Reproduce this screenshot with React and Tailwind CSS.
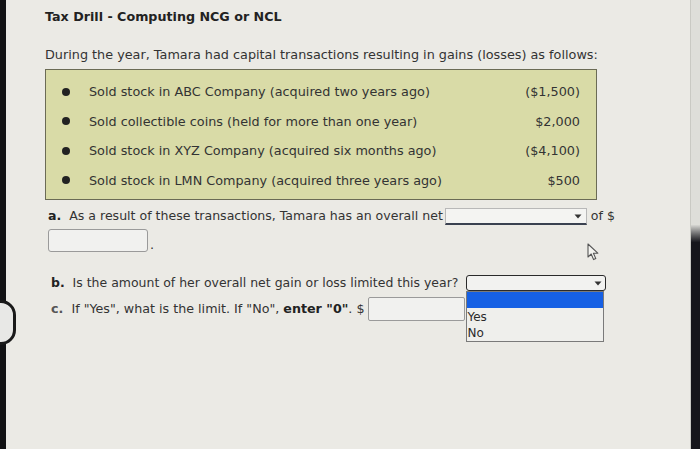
import React from 'react';

const rows = [
  { text: 'Sold stock in ABC Company (acquired two years ago)', amount: '($1,500)' },
  { text: 'Sold collectible coins (held for more than one year)', amount: '$2,000' },
  { text: 'Sold stock in XYZ Company (acquired six months ago)', amount: '($4,100)' },
  { text: 'Sold stock in LMN Company (acquired three years ago)', amount: '$500' },
];

function Caret() {
  return (
    <svg width="8" height="5" viewBox="0 0 8 5" className="shrink-0">
      <path d="M0.5 0.5 L7.5 0.5 L4 4.5 Z" fill="#333" />
    </svg>
  );
}

function Pointer() {
  return (
    <svg width="14" height="18" viewBox="0 0 14 18">
      <path
        d="M1 1 L1 14 L4.2 11 L6.6 16.6 L8.8 15.6 L6.4 10.2 L10.8 10.2 Z"
        fill="#f4f4f0"
        stroke="#555"
        strokeWidth="1.1"
        strokeLinejoin="round"
      />
    </svg>
  );
}

export default function App() {
  return (
    <div
      className="w-[700px] h-[449px] flex overflow-hidden relative bg-[#ebeae5] text-[#333] text-[12.8px]"
      style={{ fontFamily: '"DejaVu Sans", Verdana, sans-serif' }}
    >
      {/* monitor bezel, left */}
      <div className="w-[6px] bg-[#121214] shrink-0" />
      <div className="absolute left-[-14px] top-[300px] w-[30px] h-[45px] rounded-full border-[3px] border-[#1a1a1a] bg-[#e8e8e6]" />

      <div className="flex-1 pl-[39px] pt-[8px]">
        <h1 className="text-[12.7px] font-bold text-[#222] leading-[18px]">Tax Drill - Computing NCG or NCL</h1>

        <p className="mt-[20px] leading-[18px]">
          During the year, Tamara had capital transactions resulting in gains (losses) as follows:
        </p>

        <div className="mt-[5px] w-[552px] h-[131px] bg-[#d9dba7] border border-[#6b6b55] pl-[16px] pr-[16px] pt-[7px]">
          {rows.map((r) => (
            <div key={r.text} className="flex items-center h-[29.5px]">
              <span className="w-[8px] h-[8px] rounded-full bg-[#222] mr-[19px] shrink-0" />
              <span className="flex-1">{r.text}</span>
              <span>{r.amount}</span>
            </div>
          ))}
        </div>

        <div className="flex items-center mt-[7px] ml-[3px] h-[19px] text-[12.55px]">
          <span>
            <b className="text-[#222]">a.</b>&nbsp; As a result of these transactions, Tamara has an overall net
          </span>
          <div className="ml-[2px] w-[142px] h-[17px] bg-[#f4f4f2] border border-[#b8b8b8] border-b-[2px] border-b-[#3a4150] flex items-center justify-end pr-[4px]">
            <Caret />
          </div>
          <span className="ml-[4px]">of $</span>
        </div>

        <div className="flex items-end ml-[3px] mt-[3px]">
          <div className="w-[100px] h-[23px] bg-[#f1f1ef] border border-[#9a9a9a] rounded-[3px]" />
          <span className="ml-[2px] leading-[14px]">.</span>
          <div className="ml-[433px] mb-[-9px]">
            <Pointer />
          </div>
        </div>

        <div className="flex items-center mt-[22px] ml-[6px] h-[18px] text-[12.48px]">
          <span>
            <b className="text-[#222]">b.</b>&nbsp; Is the amount of her overall net gain or loss limited this year?
          </span>
          <div className="relative ml-[8px]">
            <div className="w-[140px] h-[16px] bg-[#f2f2f0] border-[1.5px] border-[#2a2a2a] rounded-[3px] flex items-center justify-end pr-[3px]">
              <Caret />
            </div>
            <div className="absolute left-0 top-[16px] w-[138px] bg-[#efefec] border border-[#7a7a7a] z-10 text-[12px] leading-[16px] text-[#2a2a2a]">
              <div className="h-[16px] bg-[#1660e4]" />
              <div className="pt-[1px]">Yes</div>
              <div>No</div>
            </div>
          </div>
        </div>

        <div className="flex items-center mt-[5px] ml-[6px] h-[24px] text-[12.7px]">
          <span>
            <b className="text-[#555]">c.</b>&nbsp; If "Yes", what is the limit. If "No", <b className="text-[#222]">enter "0"</b>. $
          </span>
          <div className="ml-[4px] w-[97px] h-[24px] bg-[#f1f1ef] border border-[#9a9a9a] rounded-[2px]" />
        </div>
      </div>

      {/* monitor edge, right */}
      <div className="w-[10px] shrink-0 border-l border-[#c9c9c3] bg-linear-to-b from-[#deded9] from-50% to-[#16161b] to-[54%]" />
    </div>
  );
}
